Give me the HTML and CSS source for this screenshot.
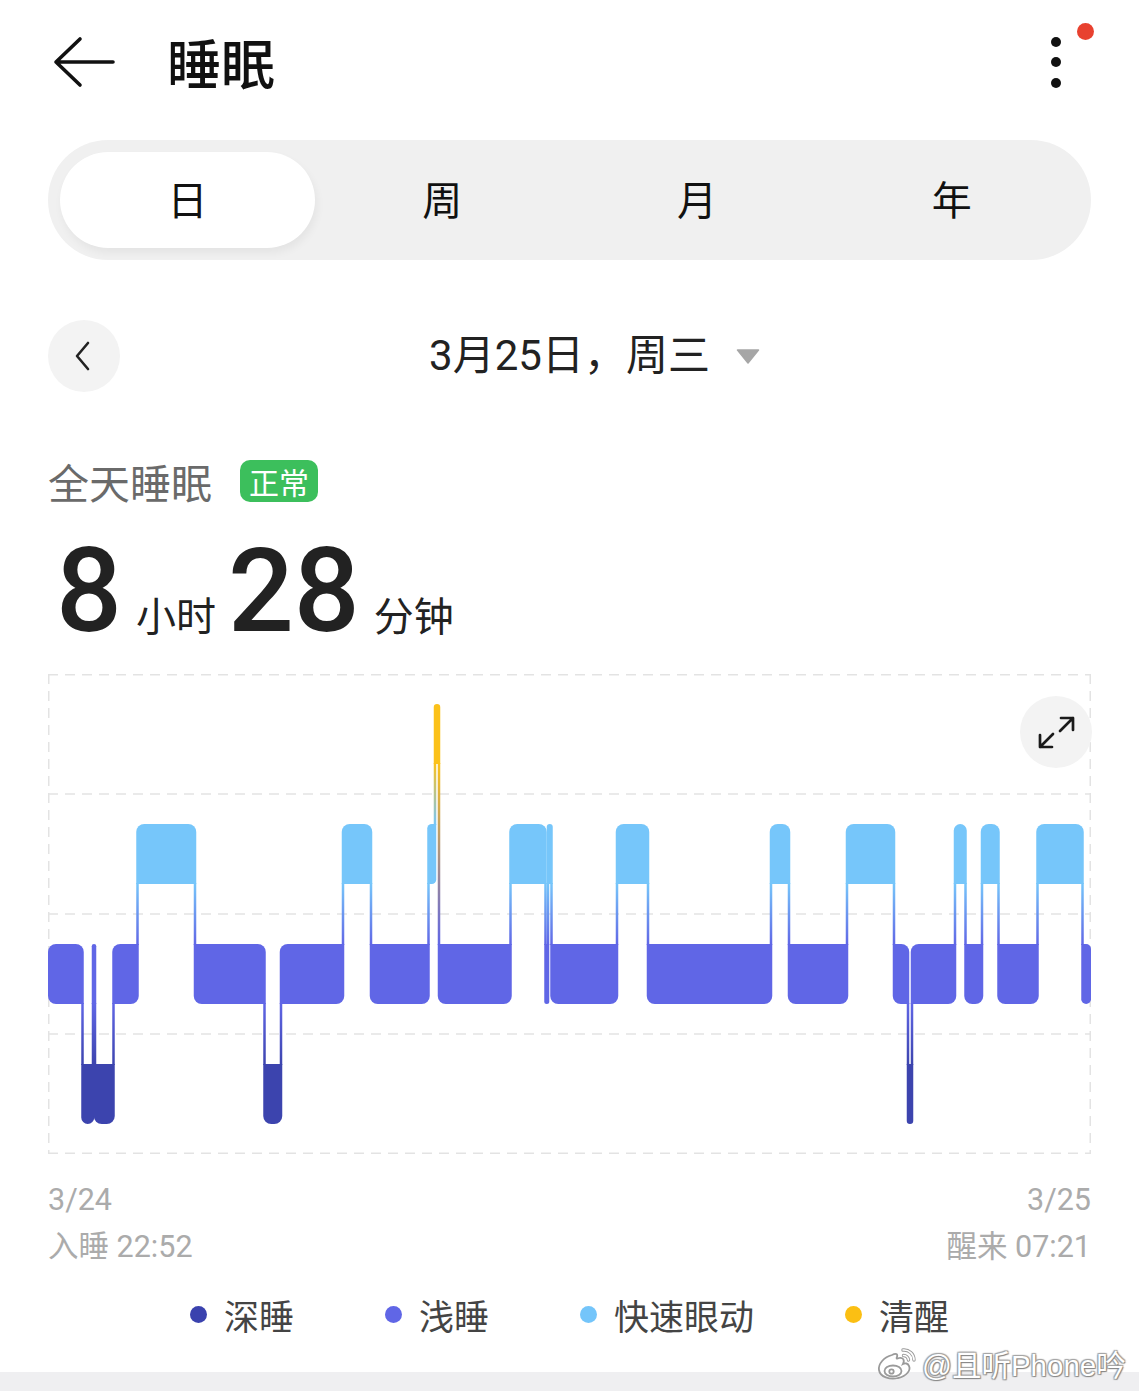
FILE: index.html
```html
<!DOCTYPE html>
<html lang="zh-CN">
<head>
<meta charset="utf-8">
<title>睡眠</title>
<link rel="stylesheet" href="styles.css">
</head>
<body>
<div class="page">
  <header class="header">
    <svg class="back" width="64" height="52" viewBox="0 0 64 52"><path d="M60 26 H3 M27 3 L3 26 L27 49" fill="none" stroke="#111" stroke-width="3.6" stroke-linecap="round" stroke-linejoin="round"/></svg>
    <h1 class="title">睡眠</h1>
    <div class="more">
      <span class="more-dot"></span>
      <span class="more-dot"></span>
      <span class="more-dot"></span>
      <span class="notice-dot"></span>
    </div>
  </header>

  <nav class="seg">
    <div class="tab active">日</div>
    <div class="tab">周</div>
    <div class="tab">月</div>
    <div class="tab">年</div>
  </nav>

  <div class="date-row">
    <button class="circle-btn"><svg width="20" height="30" viewBox="0 0 20 30"><path d="M15 2 L4 15 L15 28" fill="none" stroke="#222" stroke-width="2.6" stroke-linecap="round" stroke-linejoin="round"/></svg></button>
    <div class="date"><span class="date-text">3月25日，周三</span><svg class="caret" width="24" height="15" viewBox="0 0 24 15"><path d="M1.5 1 H22.5 L12 14 Z" fill="#A6A6A6" stroke="#A6A6A6" stroke-width="1.5" stroke-linejoin="round"/></svg></div>
    <div></div>
  </div>

  <div class="summary-head">
    <span class="summary-label">全天睡眠</span>
    <span class="status">正常</span>
  </div>

  <div class="duration">
    <span class="num first">8</span><span class="unit">小时</span><span class="num">28</span><span class="unit">分钟</span>
  </div>

  <div class="chart">
    <svg id="chart-svg" width="1043" height="480" viewBox="0 0 1043 480"></svg>
    <button class="expand"><svg width="72" height="72" viewBox="0 0 72 72"><path d="M41 22 H53 V34 M53 22 L40 35 M20 39 V51 H32 M20 51 L33 38" fill="none" stroke="#1A1A1A" stroke-width="2.7" stroke-linecap="round" stroke-linejoin="round"/></svg></button>
  </div>

  <div class="axis">
    <div class="axis-col"><div>3/24</div><div>入睡 22:52</div></div>
    <div class="axis-col right"><div>3/25</div><div>醒来 07:21</div></div>
  </div>

  <div class="legend">
    <div class="legend-item"><span class="dot deep"></span>深睡</div>
    <div class="legend-item"><span class="dot light"></span>浅睡</div>
    <div class="legend-item"><span class="dot rem"></span>快速眼动</div>
    <div class="legend-item"><span class="dot awake"></span>清醒</div>
  </div>
</div>
<div class="strip"></div>
<div class="watermark">
  <svg class="weibo" width="42" height="36" viewBox="0 0 42 36"><g fill="#fff" stroke="#9A9A9A" stroke-width="1.8"><path d="M16 10 C8 12 2 19 3 25 C4 32 14 35 22 33 C31 31 35 25 33 21 C32 18 29 18 27 19 C29 15 27 12 23 13 C21 14 20 14 21 12 C22 9 20 8 16 10 Z"/><ellipse cx="17" cy="26" rx="8.5" ry="5.5"/><circle cx="15.5" cy="26.5" r="2.2"/></g><g fill="none" stroke="#9A9A9A" stroke-width="3.4" stroke-linecap="round"><path d="M27 5 A10 10 0 0 1 38 15"/><path d="M27.5 10.5 A5 5 0 0 1 32.5 15"/></g><g fill="none" stroke="#fff" stroke-width="1.6" stroke-linecap="round"><path d="M27 5 A10 10 0 0 1 38 15"/><path d="M27.5 10.5 A5 5 0 0 1 32.5 15"/></g></svg>
  <span class="wm-text">@且听Phone吟</span>
</div>
<script src="chart.js"></script>
</body>
</html>
```

FILE: styles.css
```css
* { box-sizing: border-box; }
html, body { margin: 0; padding: 0; }
body {
  width: 1139px;
  height: 1391px;
  overflow: hidden;
  position: relative;
  background: #fff;
  font-family: Roboto, "Noto Sans CJK SC", sans-serif;
  color: #222;
}
button { border: none; padding: 0; margin: 0; font: inherit; cursor: pointer; }
.page { padding: 0 48px; }

.header { height: 124px; display: flex; align-items: center; }
.back { display: block; margin-left: 5px; }
.title {
  margin: 0 0 0 50px;
  font-family: "Noto Sans CJK SC", sans-serif;
  font-size: 54px;
  font-weight: 500;
  line-height: 1;
  color: #111;
}
.more {
  margin-left: auto;
  margin-right: 30px;
  position: relative;
  display: flex;
  flex-direction: column;
  gap: 10.5px;
}
.more-dot { display: block; width: 10px; height: 10px; border-radius: 50%; background: #111; }
.notice-dot {
  position: absolute;
  left: 26px;
  top: -14px;
  width: 17px;
  height: 17px;
  border-radius: 50%;
  background: #E8412F;
}

.seg {
  margin-top: 16px;
  height: 120px;
  border-radius: 60px;
  background: #F0F0F0;
  padding: 12px;
  display: flex;
}
.tab {
  flex: 1;
  display: flex;
  align-items: center;
  justify-content: center;
  padding-bottom: 5px;
  border-radius: 48px;
  font-family: "Noto Sans CJK SC", sans-serif;
  font-size: 40px;
  color: #111;
}
.tab.active { background: #fff; box-shadow: 2px 5px 8px rgba(0, 0, 0, 0.05); }

.date-row {
  margin-top: 60px;
  height: 72px;
  display: grid;
  grid-template-columns: 72px 1fr 72px;
  align-items: center;
}
.circle-btn {
  width: 72px; height: 72px; border-radius: 50%;
  background: #F3F3F3;
  display: flex; align-items: center; justify-content: center;
}
.circle-btn svg { display: block; margin-left: -2px; }
.date { display: flex; align-items: center; justify-content: center; padding-left: 50px; }
.date-text { font-size: 42px; color: #222; line-height: 1; }
.caret { display: block; margin-left: 26px; }

.summary-head { margin-top: 68px; height: 42px; display: flex; align-items: center; }
.summary-label {
  font-family: "Noto Sans CJK SC", sans-serif;
  font-size: 41px;
  color: #6A6A6A;
  line-height: 1;
}
.status {
  margin-left: 28px;
  width: 78px; height: 42px;
  border-radius: 10px;
  background: #3CBF5C;
  color: #fff;
  font-family: "Noto Sans CJK SC", sans-serif;
  font-size: 30px;
  display: flex; align-items: center; justify-content: center;
}

.duration { margin-top: 32px; height: 114px; display: flex; align-items: baseline; line-height: 114px; }
.num { font-family: Roboto, sans-serif; font-size: 116px; font-weight: 500; color: #222; }
.num.first { margin-left: 8px; }
.unit {
  font-family: "Noto Sans CJK SC", sans-serif;
  font-size: 40px;
  color: #222;
  margin: 0 12px 0 14px;
  line-height: 1;
}

.chart { margin-top: 26px; height: 480px; position: relative; }
.chart svg { display: block; }
.expand {
  position: absolute;
  right: -1px;
  top: 22px;
  width: 72px; height: 72px;
  border-radius: 50%;
  background: #F3F3F3;
}
.expand svg { display: block; }

.axis {
  margin-top: 22px;
  display: flex;
  justify-content: space-between;
  font-size: 30.5px;
  line-height: 47px;
  color: #ABABAB;
}
.axis-col.right { text-align: right; }

.legend {
  margin-top: 22px;
  height: 44px;
  display: flex;
  justify-content: center;
  align-items: center;
  gap: 91px;
}
.legend-item {
  display: flex;
  align-items: center;
  gap: 17px;
  font-family: "Noto Sans CJK SC", sans-serif;
  font-size: 35px;
  color: #444;
}
.dot { width: 17px; height: 17px; border-radius: 50%; display: block; }
.dot.deep { background: #3A42AE; }
.dot.light { background: #6066E6; }
.dot.rem { background: #74C5FA; }
.dot.awake { background: #FBBF13; }

.strip { margin-top: 36px; height: 40px; background: #EFEFF1; }

.watermark {
  position: absolute;
  left: 876px;
  top: 1342px;
  display: flex;
  align-items: center;
  gap: 4px;
}
.weibo { display: block; }
.wm-text {
  font-family: "Liberation Sans", "Noto Sans CJK SC", sans-serif;
  font-size: 29.5px;
  color: #fff;
  text-shadow: 0 0 1px #777, 1px 1px 1px #888, -1px -1px 1px #aaa, 1px -1px 1px #aaa, -1px 1px 1px #aaa;
}
```

FILE: chart.js
```js
(function () {
  var NS = 'http://www.w3.org/2000/svg';
  var svg = document.getElementById('chart-svg');
  var W = 1043, H = 480, X0 = 48, END = 1091;
  var BH = 60, HALF = 1.25, R = 8;
  var bands = {
    awake: { lvl: 0, top: 30, color: '#FBC11A' },
    rem:   { lvl: 1, top: 150, color: '#76C6FA' },
    light: { lvl: 2, top: 270, color: '#6066E6' },
    deep:  { lvl: 3, top: 390, color: '#3C44AE' }
  };
  var data = [
    ['light', 48], ['deep', 82.5], ['light', 93], ['deep', 95], ['light', 113.5],
    ['rem', 137.5], ['light', 195], ['deep', 264.5], ['light', 281], ['rem', 343],
    ['light', 371], ['rem', 428.5], ['awake', 435], ['light', 439], ['rem', 510.5],
    ['light', 545.5], ['rem', 548], ['light', 551.5], ['rem', 617], ['light', 648],
    ['rem', 771], ['light', 789], ['rem', 847], ['light', 894], ['deep', 908],
    ['light', 912], ['rem', 955], ['light', 965.5], ['rem', 982], ['light', 998.5],
    ['rem', 1037.5], ['light', 1082.5]
  ];

  function el(name, attrs) {
    var e = document.createElementNS(NS, name);
    for (var k in attrs) e.setAttribute(k, attrs[k]);
    return e;
  }

  var grid = el('g', { stroke: '#E3E3E3', 'stroke-width': '1.5', 'stroke-dasharray': '10 7', fill: 'none' });
  [0.75, 120, 240, 360, 479.25].forEach(function (y) {
    grid.appendChild(el('line', { x1: 0, y1: y, x2: W, y2: y }));
  });
  [0.75, W - 0.75].forEach(function (x) {
    grid.appendChild(el('line', { x1: x, y1: 0, x2: x, y2: H }));
  });
  svg.appendChild(grid);

  var defs = el('defs', {});
  svg.appendChild(defs);
  var made = {};
  function grad(up, low) {
    var id = 'g-' + up + '-' + low;
    if (!made[id]) {
      var g = el('linearGradient', { id: id, x1: 0, y1: 0, x2: 0, y2: 1 });
      g.appendChild(el('stop', { offset: 0, 'stop-color': bands[up].color }));
      g.appendChild(el('stop', { offset: 1, 'stop-color': bands[low].color }));
      defs.appendChild(g);
      made[id] = true;
    }
    return 'url(#' + id + ')';
  }

  var n = data.length, i;
  for (i = 1; i < n; i++) {
    var a = data[i - 1][0], b = data[i][0];
    var up = bands[a].lvl < bands[b].lvl ? a : b;
    var low = up === a ? b : a;
    var x = data[i][1] - X0;
    var y0 = bands[up].top + BH - 1;
    var y1 = bands[low].top + 1;
    svg.appendChild(el('rect', { x: x - HALF, y: y0, width: HALF * 2, height: y1 - y0, fill: grad(up, low) }));
  }

  for (i = 0; i < n; i++) {
    var s = data[i][0];
    var x0 = data[i][1] - X0 - (i > 0 ? HALF : 0);
    var x1 = i < n - 1 ? data[i + 1][1] - X0 + HALF : END - X0;
    var top = bands[s].top, bot = top + BH;
    var r = Math.min(R, (x1 - x0) / 2);
    var tl = r, tr = r, br = r, bl = r;
    if (i > 0) {
      if (bands[data[i - 1][0]].lvl < bands[s].lvl) tl = 0; else bl = 0;
    }
    if (i < n - 1) {
      if (bands[data[i + 1][0]].lvl < bands[s].lvl) tr = 0; else br = 0;
    }
    var d = 'M' + (x0 + tl) + ' ' + top +
      ' H' + (x1 - tr) +
      ' A' + tr + ' ' + tr + ' 0 0 1 ' + x1 + ' ' + (top + tr) +
      ' V' + (bot - br) +
      ' A' + br + ' ' + br + ' 0 0 1 ' + (x1 - br) + ' ' + bot +
      ' H' + (x0 + bl) +
      ' A' + bl + ' ' + bl + ' 0 0 1 ' + x0 + ' ' + (bot - bl) +
      ' V' + (top + tl) +
      ' A' + tl + ' ' + tl + ' 0 0 1 ' + (x0 + tl) + ' ' + top + ' Z';
    svg.appendChild(el('path', { d: d, fill: bands[s].color }));
  }
})();
```
